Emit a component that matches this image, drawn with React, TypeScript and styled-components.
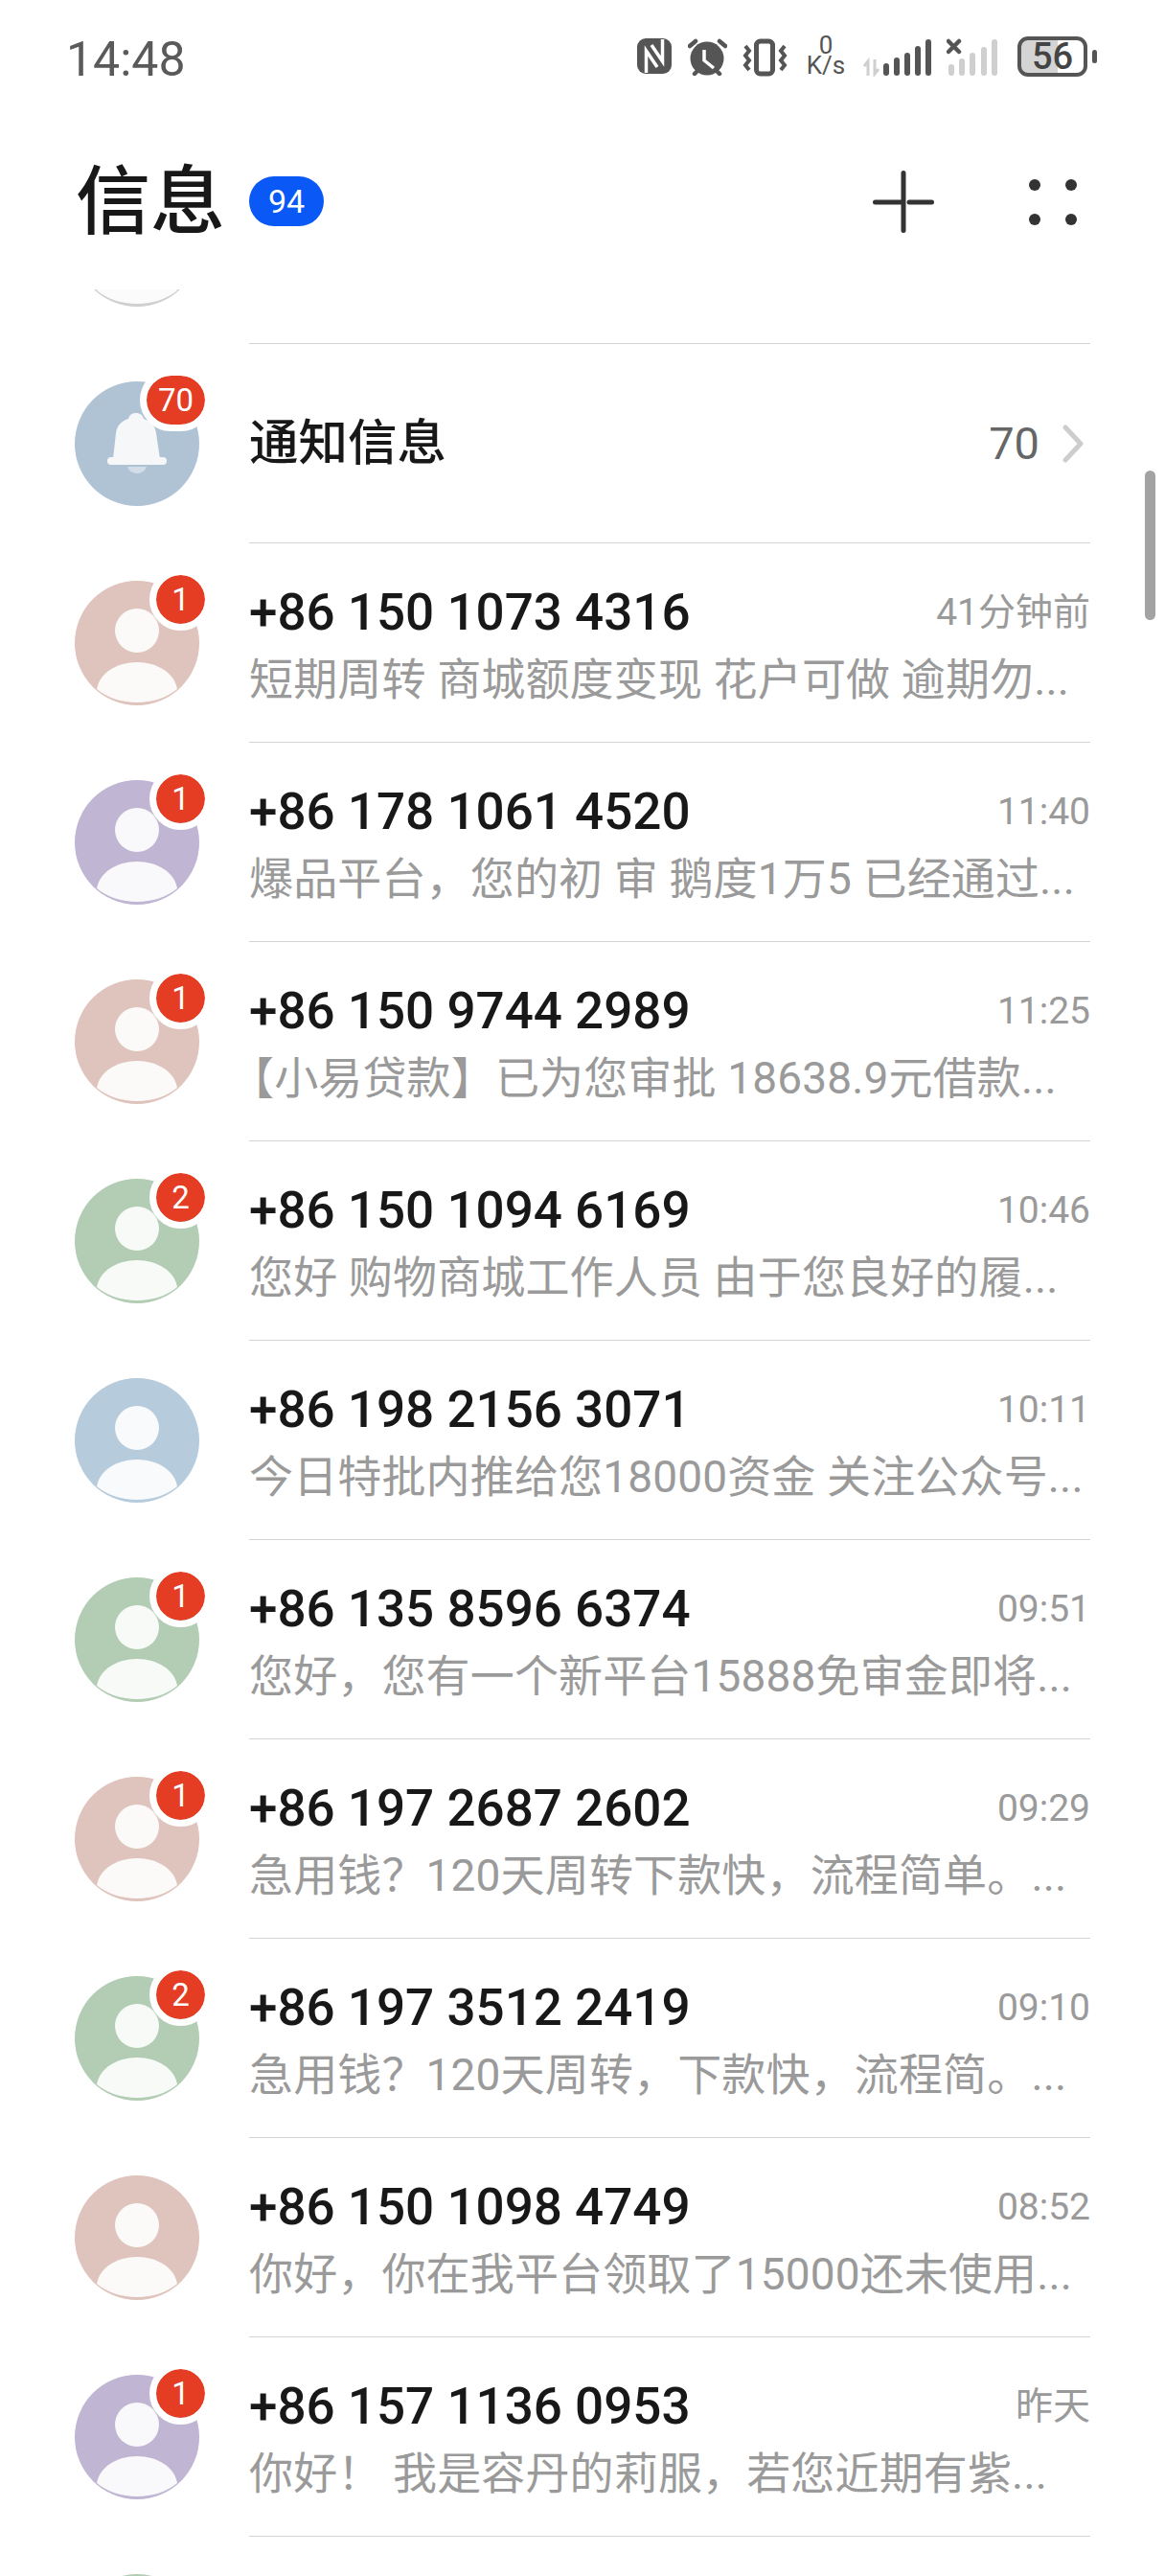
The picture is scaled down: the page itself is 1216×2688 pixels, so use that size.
import React from "react";
import styled, { createGlobalStyle } from "styled-components";

const GlobalStyle = createGlobalStyle`
  html, body {
    margin: 0;
    padding: 0;
    background: #fff;
  }
  body {
    font-family: Roboto, "Noto Sans CJK SC", sans-serif;
  }
`;

const Screen = styled.div`
  position: relative;
  width: 1216px;
  height: 2688px;
  overflow: hidden;
  background: #fff;
  display: flex;
  flex-direction: column;
`;

/* status bar */
const StatusBar = styled.div`
  height: 84px;
  flex: none;
  padding: 38px 71px 0 69px;
  box-sizing: border-box;
  display: flex;
  justify-content: space-between;
  align-items: flex-start;
  color: #555;
`;

const Clock = styled.div`
  font-size: 50px;
  line-height: 48px;
  color: #5a5a5a;
`;

const StatusIcons = styled.div`
  display: flex;
  align-items: flex-start;
  margin-top: 2px;
`;

const StatusIcon = styled.svg<{ $gap: number }>`
  display: block;
  flex: none;
  margin-right: ${(p) => p.$gap}px;
`;

const Speed = styled.div`
  width: 42px;
  margin: -3px 18px 0 0;
  text-align: center;
  color: #555;
  font-size: 26px;
  line-height: 21px;
`;

const Battery = styled.div`
  width: 73px;
  height: 42px;
  margin-top: -2px;
  box-sizing: border-box;
  border: 4px solid #555;
  border-radius: 11px;
  overflow: hidden;
  display: flex;
  align-items: center;
  justify-content: center;
  font-size: 38px;
  font-weight: 500;
  color: #444;
  background: linear-gradient(to right, #d4d4d4 0 38px, #fff 38px);
`;

const BatteryNub = styled.div`
  width: 5px;
  height: 14px;
  margin: 12px 0 0 5px;
  border-radius: 3px;
  background: #555;
`;

/* title row */
const Header = styled.div`
  height: 218px;
  flex: none;
  position: relative;
  z-index: 1;
  background: #fff;
  padding: 76px 92px 0 79px;
  box-sizing: border-box;
  display: flex;
  align-items: flex-start;
`;

const Title = styled.h1`
  margin: 0;
  font-size: 78px;
  line-height: 88px;
  font-weight: 500;
  color: #181818;
  font-family: "Noto Sans CJK SC", sans-serif;
`;

const TotalBadge = styled.div`
  width: 78px;
  height: 52px;
  margin: 24px 0 0 25px;
  border-radius: 26px;
  background: #0a59f7;
  color: #fff;
  font-size: 34px;
  line-height: 52px;
  text-align: center;
`;

const HeaderActions = styled.div`
  margin: 18px 0 0 auto;
  height: 65px;
  display: flex;
  align-items: center;
  gap: 99px;
`;

const ActionIcon = styled.svg`
  display: block;
`;

/* list */
const List = styled.div`
  flex: 1;
  min-height: 0;
  overflow: hidden;
  margin-top: -1px;
`;

const Scroller = styled.div`
  margin-top: -150px;
`;

const Row = styled.div`
  height: 208px;
  display: flex;
  align-items: center;
  padding-left: 78px;
`;

const AvatarWrap = styled.div`
  position: relative;
  flex: none;
  width: 130px;
  height: 130px;
  margin-right: 52px;
`;

const Disc = styled.svg`
  display: block;
`;

const CountBadge = styled.div<{ $wide?: boolean }>`
  position: absolute;
  top: -6px;
  right: -6px;
  box-sizing: content-box;
  width: ${(p) => (p.$wide ? 61 : 51)}px;
  height: 51px;
  border: 7px solid #fff;
  margin: -7px;
  border-radius: 33px;
  background: #e43d24;
  background-clip: padding-box;
  color: #fff;
  font-size: 33px;
  line-height: 51px;
  text-align: center;
`;

const RowBody = styled.div`
  flex: none;
  width: 878px;
  height: 208px;
  box-sizing: border-box;
  border-bottom: 1.5px solid #d4d4d4;
  display: flex;
  flex-direction: column;
`;

const TopLine = styled.div`
  margin-top: 42px;
  height: 60px;
  display: flex;
  align-items: center;
  justify-content: space-between;
`;

const Name = styled.div`
  font-size: 53px;
  font-weight: 500;
  line-height: 58px;
  color: #181818;
  white-space: nowrap;
`;

const NoticeName = styled(Name)`
  font-size: 51.5px;
`;

const When = styled.div`
  font-size: 39px;
  line-height: 60px;
  color: #9a9a9a;
  white-space: nowrap;
`;

const Preview = styled.div<{ $indent?: number }>`
  margin-top: 10px;
  font-size: 46px;
  line-height: 60px;
  letter-spacing: 0.15px;
  color: #9a9a9a;
  white-space: nowrap;
  text-indent: ${(p) => p.$indent ?? 0}px;
`;

const NoticeBody = styled(RowBody)`
  flex-direction: row;
  align-items: center;
  justify-content: space-between;
  padding-right: 7px;
`;

const NoticeCount = styled.div`
  display: flex;
  align-items: center;
  gap: 24px;
  font-size: 47px;
  color: #666;
`;

const ScrollThumb = styled.div`
  position: absolute;
  left: 1195px;
  top: 491px;
  width: 11px;
  height: 156px;
  border-radius: 6px;
  background: #a3a3a3;
`;

const PersonAvatar = ({ color }: { color: string }) => (
  <Disc width="130" height="130" viewBox="0 0 130 130">
    <circle cx="65" cy="65" r="65" fill={color} />
    <circle cx="65" cy="52" r="23" fill="#fff" fillOpacity="0.9" />
    <path
      d="M23 113C26 96 44 85 65 85C86 85 104 96 107 113C96 122 81 127 65 127C49 127 34 122 23 113Z"
      fill="#fff"
      fillOpacity="0.9"
    />
  </Disc>
);

const BellAvatar = () => (
  <Disc width="130" height="130" viewBox="0 0 130 130">
    <circle cx="65" cy="65" r="65" fill="#b0c3d5" />
    <path
      d="M40 81L43 54C44 45 50 41 56 39C57 35 60 33 64 33C68 33 71 35 72 39C79 41 84 46 85 54L89 81Z"
      fill="#f5f7f9"
    />
    <rect x="34" y="79" width="62" height="8" rx="4" fill="#f5f7f9" />
    <path d="M55 89H75C73 94 69 96 65 96C61 96 57 94 55 89Z" fill="#d3dde7" />
  </Disc>
);

const rows = [
  { name: "+86 150 1073 4316", when: "41分钟前", text: "短期周转 商城额度变现 花户可做 逾期勿...", color: "#dec4bc", count: 1 },
  { name: "+86 178 1061 4520", when: "11:40", text: "爆品平台，您的初 审 鹅度1万5 已经通过...", color: "#c0b5d2", count: 1 },
  { name: "+86 150 9744 2989", when: "11:25", text: "【小易贷款】已为您审批 18638.9元借款...", color: "#dec4bc", count: 1, indent: -20 },
  { name: "+86 150 1094 6169", when: "10:46", text: "您好 购物商城工作人员 由于您良好的履...", color: "#b3cdb5", count: 2 },
  { name: "+86 198 2156 3071", when: "10:11", text: "今日特批内推给您18000资金 关注公众号...", color: "#b6cbdb", count: 0 },
  { name: "+86 135 8596 6374", when: "09:51", text: "您好，您有一个新平台15888免审金即将...", color: "#b3cdb5", count: 1 },
  { name: "+86 197 2687 2602", when: "09:29", text: "急用钱？120天周转下款快，流程简单。...", color: "#dec4bc", count: 1 },
  { name: "+86 197 3512 2419", when: "09:10", text: "急用钱？120天周转，下款快，流程简。...", color: "#b3cdb5", count: 2 },
  { name: "+86 150 1098 4749", when: "08:52", text: "你好，你在我平台领取了15000还未使用...", color: "#dec4bc", count: 0 },
  { name: "+86 157 1136 0953", when: "昨天", text: "你好！ 我是容丹的莉服，若您近期有紫...", color: "#c0b5d2", count: 1 },
  { name: "", when: "", text: "", color: "#b3cdb5", count: 0 },
];

const App = () => {
  return (
    <Screen>
      <GlobalStyle />
      <StatusBar>
        <Clock>14:48</Clock>
        <StatusIcons>
          <StatusIcon $gap={17} width="36" height="37" viewBox="0 0 36 37">
            <rect width="36" height="37" rx="9" fill="#555" />
            <path d="M9.5 36V13L21 30" stroke="#fff" strokeWidth="3.5" fill="none" />
            <path d="M26.5 1V24L15 7" stroke="#fff" strokeWidth="3.5" fill="none" />
          </StatusIcon>
          <StatusIcon $gap={16} width="41" height="39" viewBox="0 0 41 39">
            <circle cx="20" cy="21" r="17.5" fill="#555" />
            <path d="M17 12V23L27 31" stroke="#fff" strokeWidth="3.5" fill="none" />
            <path d="M2 8L8 3M39 8L33 3M7 37L10 34M33 37L30 34" stroke="#555" strokeWidth="4.5" strokeLinecap="round" />
          </StatusIcon>
          <StatusIcon $gap={19} width="47" height="40" viewBox="0 0 47 40">
            <rect x="14.5" y="3" width="17" height="34" rx="4" fill="none" stroke="#555" strokeWidth="5" />
            <path d="M3 8L7 13L3 18L7 23L3 28L7 33M44 8L40 13L44 18L40 23L44 28L40 33" stroke="#555" strokeWidth="4" fill="none" />
          </StatusIcon>
          <Speed>
            0<br />K/s
          </Speed>
          <StatusIcon $gap={16} width="71" height="40" viewBox="0 0 71 40">
            <path d="M5 39V24L1 29M12 22V37L16 32" stroke="#cfcfcf" strokeWidth="3" fill="none" />
            <rect x="21" y="26" width="6" height="13" rx="3" fill="#555" />
            <rect x="32" y="20" width="6" height="19" rx="3" fill="#555" />
            <rect x="43" y="15" width="6" height="24" rx="3" fill="#555" />
            <rect x="54" y="8" width="6" height="31" rx="3" fill="#555" />
            <rect x="65" y="1" width="6" height="38" rx="3" fill="#555" />
          </StatusIcon>
          <StatusIcon $gap={18} width="56" height="40" viewBox="0 0 56 40">
            <path d="M2 3L13 14M13 3L2 14" stroke="#555" strokeWidth="4.5" strokeLinecap="round" />
            <rect x="2" y="27" width="6" height="12" rx="3" fill="#cfcfcf" />
            <rect x="13" y="21" width="6" height="18" rx="3" fill="#cfcfcf" />
            <rect x="24" y="15" width="6" height="24" rx="3" fill="#cfcfcf" />
            <rect x="36" y="9" width="6" height="30" rx="3" fill="#cfcfcf" />
            <rect x="47" y="1" width="6" height="38" rx="3" fill="#cfcfcf" />
          </StatusIcon>
          <Battery>56</Battery>
          <BatteryNub />
        </StatusIcons>
      </StatusBar>

      <Header>
        <Title>信息</Title>
        <TotalBadge>94</TotalBadge>
        <HeaderActions>
          <ActionIcon width="64" height="65" viewBox="0 0 64 65">
            <path d="M32 2.5V62.5M2.5 33H29M38 33H61.5" stroke="#333" strokeWidth="5" strokeLinecap="round" />
          </ActionIcon>
          <ActionIcon width="50" height="48" viewBox="0 0 50 48">
            <circle cx="6" cy="6" r="6" fill="#333" />
            <circle cx="44" cy="6" r="6" fill="#333" />
            <circle cx="6" cy="42" r="6" fill="#333" />
            <circle cx="44" cy="42" r="6" fill="#333" />
          </ActionIcon>
        </HeaderActions>
      </Header>

      <List>
        <Scroller>
          <Row>
            <AvatarWrap>
              <PersonAvatar color="#cfcfcf" />
            </AvatarWrap>
            <RowBody />
          </Row>
          <Row>
            <AvatarWrap>
              <BellAvatar />
              <CountBadge $wide>70</CountBadge>
            </AvatarWrap>
            <NoticeBody>
              <NoticeName>通知信息</NoticeName>
              <NoticeCount>
                70
                <svg width="22" height="40" viewBox="0 0 22 40">
                  <path d="M3 3L19 20L3 37" stroke="#cdcdcd" strokeWidth="5" fill="none" strokeLinecap="round" strokeLinejoin="round" />
                </svg>
              </NoticeCount>
            </NoticeBody>
          </Row>
          {rows.map((row, index) => (
            <Row key={index}>
              <AvatarWrap>
                <PersonAvatar color={row.color} />
                {row.count > 0 && <CountBadge>{row.count}</CountBadge>}
              </AvatarWrap>
              <RowBody>
                <TopLine>
                  <Name>{row.name}</Name>
                  <When>{row.when}</When>
                </TopLine>
                <Preview $indent={row.indent}>{row.text}</Preview>
              </RowBody>
            </Row>
          ))}
        </Scroller>
      </List>
      <ScrollThumb />
    </Screen>
  );
};

export default App;
